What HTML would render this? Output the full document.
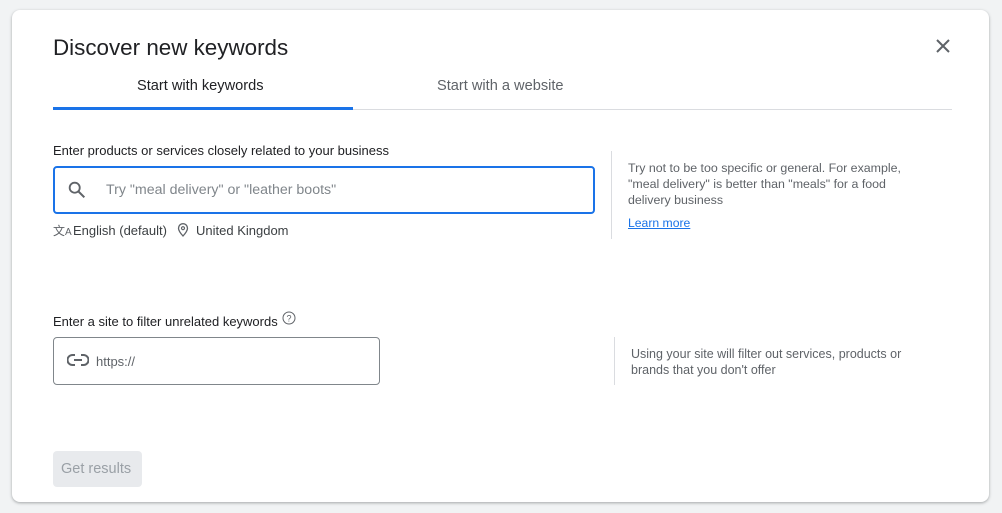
<!DOCTYPE html>
<html><head><meta charset="utf-8"><style>
*{margin:0;padding:0;box-sizing:border-box}
body{width:1002px;height:513px;background:#f1f3f4;font-family:"Liberation Sans",Arial,sans-serif;position:relative;overflow:hidden;color:#202124}
.card{position:absolute;left:12px;top:10px;width:977px;height:492px;background:#fff;border-radius:8px;box-shadow:0 1px 3px rgba(60,64,67,.3),0 1px 2px rgba(60,64,67,.15)}
.a{position:absolute;white-space:nowrap}
</style></head><body>
<div class="card"></div>
<div class="a" style="left:53px;top:35px;font-size:22.4px;color:#202124">Discover new keywords</div>
<svg class="a" style="left:934px;top:37px" width="18" height="18" viewBox="0 0 18 18"><path d="M3 3L15 15M15 3L3 15" stroke="#5f6368" stroke-width="2"/></svg>
<div class="a" style="left:137px;top:78px;font-size:14.6px;color:#202124">Start with keywords</div>
<div class="a" style="left:437px;top:78px;font-size:14.6px;color:#5f6368">Start with a website</div>
<div class="a" style="left:53px;top:109px;width:899px;height:1px;background:#dadce0"></div>
<div class="a" style="left:53px;top:107px;width:300px;height:3px;background:#1a73e8"></div>
<div class="a" style="left:53px;top:143px;font-size:13px;color:#202124">Enter products or services closely related to your business</div>
<div class="a" style="left:53px;top:166px;width:542px;height:48px;border:2px solid #1a73e8;border-radius:4px"></div>
<svg class="a" style="left:66px;top:179px" width="22" height="22" viewBox="0 0 24 24"><circle cx="9.5" cy="9.5" r="5.5" fill="none" stroke="#5f6368" stroke-width="2"/><path d="M13.5 13.5L20 20" stroke="#5f6368" stroke-width="2.2"/></svg>
<div class="a" style="left:106px;top:182px;font-size:14.2px;color:#80868b">Try "meal delivery" or "leather boots"</div>
<div class="a" style="left:53px;top:222px;font-size:12px;color:#5f6368">文<span style="font-size:10px">A</span></div>
<div class="a" style="left:73px;top:223px;font-size:13px;color:#3c4043">English (default)</div>
<svg class="a" style="left:177px;top:223px" width="12" height="14" viewBox="0 0 12 14"><path d="M6 13C6 13 1.5 8 1.5 5.2A4.5 4.5 0 0 1 10.5 5.2C10.5 8 6 13 6 13Z" fill="none" stroke="#5f6368" stroke-width="1.3"/><circle cx="6" cy="5.2" r="1.5" fill="none" stroke="#5f6368" stroke-width="1.2"/></svg>
<div class="a" style="left:196px;top:223px;font-size:13px;color:#3c4043">United Kingdom</div>
<div class="a" style="left:611px;top:151px;width:1px;height:88px;background:#dadce0"></div>
<div class="a" style="left:628px;top:160px;font-size:12.4px;color:#5f6368;line-height:16px">Try not to be too specific or general. For example,<br>"meal delivery" is better than "meals" for a food<br>delivery business</div>
<div class="a" style="left:628px;top:216px;font-size:12.2px;color:#1a73e8;text-decoration:underline">Learn more</div>
<div class="a" style="left:53px;top:314px;font-size:13px;color:#202124">Enter a site to filter unrelated keywords</div>
<svg class="a" style="left:282px;top:311px" width="14" height="14" viewBox="0 0 14 14"><circle cx="7" cy="7" r="6" fill="none" stroke="#5f6368" stroke-width="1"/><text x="7" y="10.3" font-size="9" text-anchor="middle" fill="#5f6368" font-family="Liberation Sans">?</text></svg>
<div class="a" style="left:53px;top:337px;width:327px;height:48px;border:1px solid #80868b;border-radius:4px"></div>
<svg class="a" style="left:67px;top:353px" width="22" height="14" viewBox="0 0 22 14"><path d="M8 2H5.5A5 5 0 0 0 5.5 12H8M14 2H16.5A5 5 0 0 1 16.5 12H14M7 7H15" fill="none" stroke="#5f6368" stroke-width="2"/></svg>
<div class="a" style="left:96px;top:354px;font-size:13px;color:#5f6368">https://</div>
<div class="a" style="left:614px;top:337px;width:1px;height:48px;background:#dadce0"></div>
<div class="a" style="left:631px;top:346px;font-size:12.5px;color:#5f6368;line-height:16px">Using your site will filter out services, products or<br>brands that you don't offer</div>
<div class="a" style="left:53px;top:451px;width:89px;height:36px;background:#e8eaed;border-radius:4px"></div>
<div class="a" style="left:61px;top:461px;font-size:14.5px;color:#9aa0a6">Get results</div>
</body></html>
